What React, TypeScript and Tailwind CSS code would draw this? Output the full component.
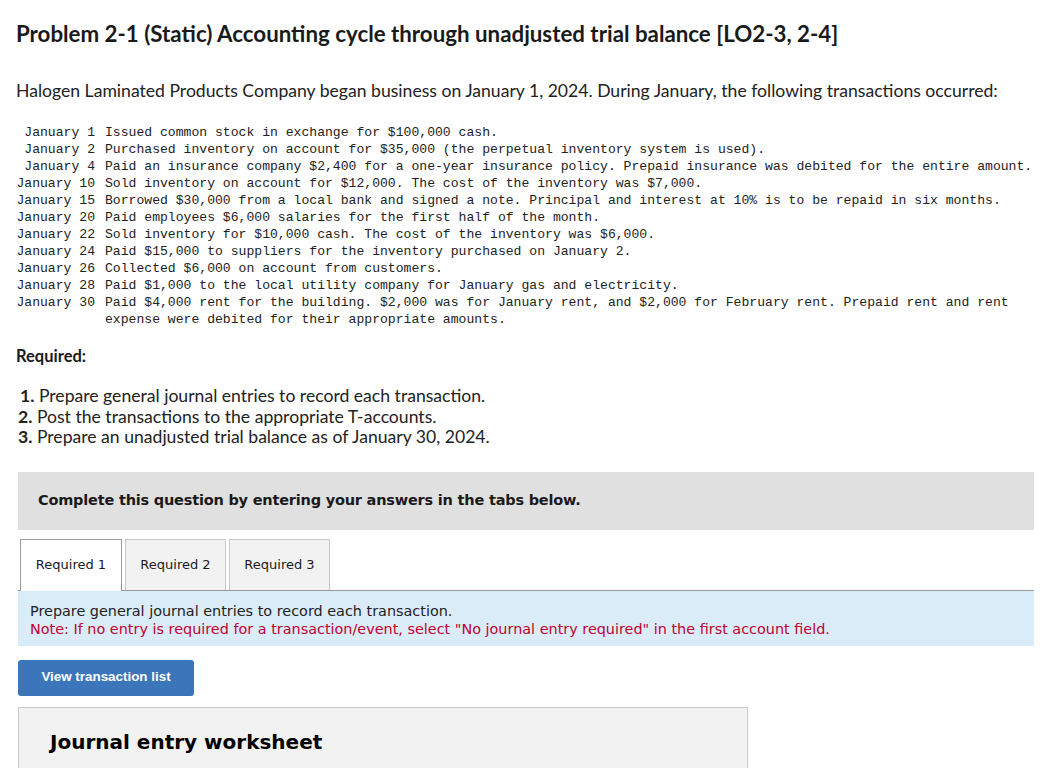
import React from 'react';

const transactions: [string, string][] = [
  ['January 1', 'Issued common stock in exchange for $100,000 cash.'],
  ['January 2', 'Purchased inventory on account for $35,000 (the perpetual inventory system is used).'],
  ['January 4', 'Paid an insurance company $2,400 for a one-year insurance policy. Prepaid insurance was debited for the entire amount.'],
  ['January 10', 'Sold inventory on account for $12,000. The cost of the inventory was $7,000.'],
  ['January 15', 'Borrowed $30,000 from a local bank and signed a note. Principal and interest at 10% is to be repaid in six months.'],
  ['January 20', 'Paid employees $6,000 salaries for the first half of the month.'],
  ['January 22', 'Sold inventory for $10,000 cash. The cost of the inventory was $6,000.'],
  ['January 24', 'Paid $15,000 to suppliers for the inventory purchased on January 2.'],
  ['January 26', 'Collected $6,000 on account from customers.'],
  ['January 28', 'Paid $1,000 to the local utility company for January gas and electricity.'],
  [
    'January 30',
    'Paid $4,000 rent for the building. $2,000 was for January rent, and $2,000 for February rent. Prepaid rent and rent\nexpense were debited for their appropriate amounts.',
  ],
];

const required = [
  'Prepare general journal entries to record each transaction.',
  'Post the transactions to the appropriate T-accounts.',
  'Prepare an unadjusted trial balance as of January 30, 2024.',
];

const tabs = ['Required 1', 'Required 2', 'Required 3'];

export default function App() {
  return (
    <div className="min-h-[768px] bg-white text-[#1a1a1a] font-['Lato','Open_Sans',sans-serif]">
      <div className="pl-[16px] pr-[26px] pt-[19px]">
        <h1 className="text-[22.3px] font-bold leading-[30px]">
          Problem 2-1 (Static) Accounting cycle through unadjusted trial balance [LO2-3, 2-4]
        </h1>

        <p className="mt-[30px] text-[17.6px] leading-[24px] text-[#222]">
          Halogen Laminated Products Company began business on January 1, 2024. During January, the following
          transactions occurred:
        </p>

        <div className="mt-[21px] grid grid-cols-[89px_1fr] font-['Liberation_Mono',monospace] text-[13.1px] leading-[17px] text-[#222]">
          {transactions.map(([date, text]) => (
            <React.Fragment key={date}>
              <div className="whitespace-pre text-right pr-[10px]">{date}</div>
              <div className="whitespace-pre">{text}</div>
            </React.Fragment>
          ))}
        </div>

        <h2 className="mt-[17px] text-[16.5px] font-bold leading-[22px]">Required:</h2>

        <ol className="mt-[19px] text-[17.6px] leading-[20.5px] text-[#222]">
          {required.map((r, i) => (
            <li key={i} className={i === 0 ? 'pl-[4px]' : 'pl-[2px]'}>
              <span className="font-bold">{i + 1}.</span> {r}
            </li>
          ))}
        </ol>
      </div>

      <div className="pl-[18px] pr-[26px] font-['Verdana','DejaVu_Sans',sans-serif]">
        <div className="mt-[24px] h-[58px] bg-[#e0e0e0] flex items-center pl-[20px]">
          <span className="font-bold text-[14.5px] tracking-[-0.2px]">
            Complete this question by entering your answers in the tabs below.
          </span>
        </div>

        <div className="mt-[9px] flex pl-[2px] gap-[3px] items-end">
          {tabs.map((t, i) => (
            <div
              key={t}
              className={
                i === 0
                  ? 'h-[52px] w-[102px] bg-white border border-b-0 border-[#999] flex items-center justify-center text-[13px] -mb-px relative z-10'
                  : 'h-[51px] w-[101px] bg-[#f2f2f2] border border-b-0 border-[#c8c8c8] flex items-center justify-center text-[13px]'
              }
            >
              {t}
            </div>
          ))}
        </div>

        <div className="border-t border-[#999] bg-[#dbecf9] h-[56px] pl-[12px] pt-[11px] text-[14.4px] leading-[18px]">
          <div className="text-[#222]">Prepare general journal entries to record each transaction.</div>
          <div className="text-[#c20030]">
            Note: If no entry is required for a transaction/event, select "No journal entry required" in the first account
            field.
          </div>
        </div>

        <button className="mt-[14px] h-[36px] w-[176px] rounded-[3px] bg-[#3a76b9] text-white font-bold text-[13.4px] font-['Liberation_Sans',Arial,sans-serif] flex items-center justify-center">
          View transaction list
        </button>

        <div className="mt-[11px] w-[730px] h-[80px] bg-[#f2f2f2] border border-[#c8c8c8] pl-[31px] pt-[20px]">
          <h3 className="font-bold text-[20px] leading-[28px] text-black">Journal entry worksheet</h3>
        </div>
      </div>
    </div>
  );
}
